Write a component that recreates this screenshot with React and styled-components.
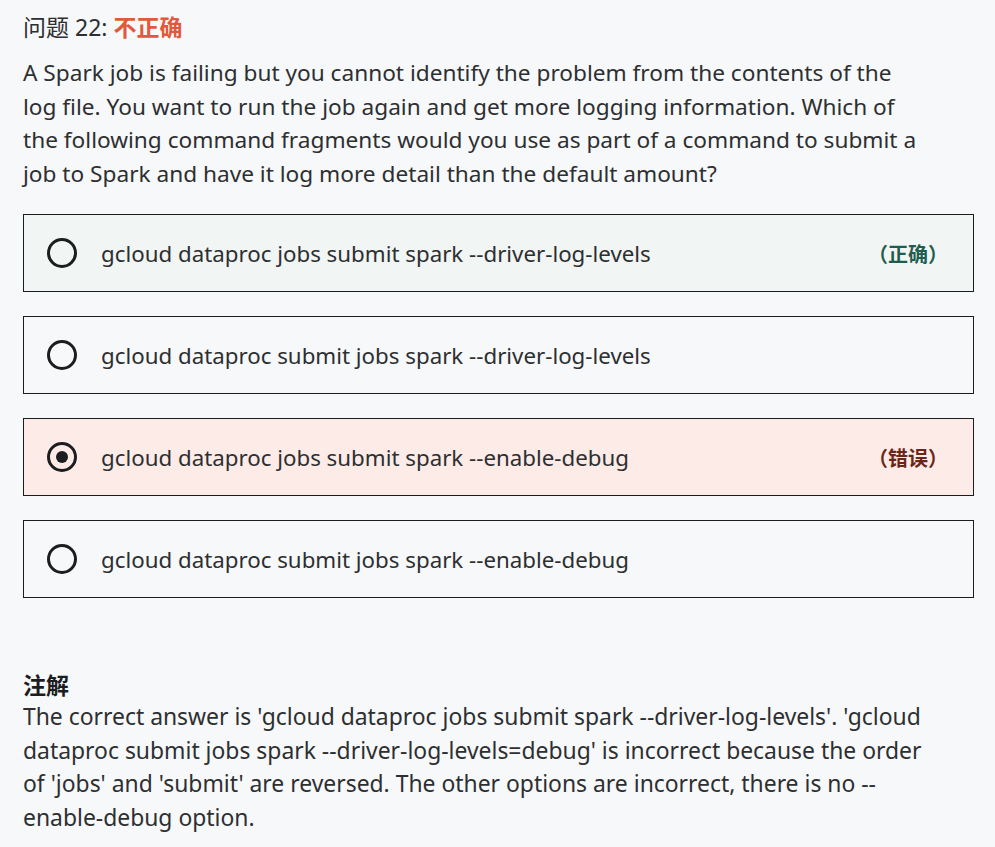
import React from "react";
import styled, { createGlobalStyle } from "styled-components";

const GlobalStyle = createGlobalStyle`
    html, body {
        margin: 0;
        padding: 0;
        background: #f7f8fa;
    }
    body {
        font-family: "Noto Sans", "Noto Sans CJK SC", sans-serif;
        color: #2d2f31;
    }
`;

const Page = styled.div`
    padding: 10px 22px 20px 23px;
    width: 951px;
`;

const Title = styled.div`
    font-size: 23px;
    line-height: 34px;
    color: #2d2f31;
`;

const Verdict = styled.span`
    font-weight: 700;
    color: #e0593a;
`;

const Question = styled.p`
    margin: 12px 0 24px;
    max-width: 905px;
    font-size: 22.65px;
    line-height: 33.5px;
`;

const Options = styled.div`
    display: flex;
    flex-direction: column;
    gap: 24px;
`;

const Option = styled.div`
    display: flex;
    align-items: center;
    height: 76px;
    padding: 0 25px 0 23px;
    border: 1px solid #1c1d1f;
    background: ${({ $state }) =>
        $state === "correct" ? "#f1f5f4" : $state === "wrong" ? "#fcebe7" : "#f7f8fa"};
`;

const Radio = styled.span`
    box-sizing: border-box;
    width: 30px;
    height: 30px;
    border-radius: 50%;
    border: 3px solid #1c1d1f;
    display: flex;
    align-items: center;
    justify-content: center;
    flex-shrink: 0;

    &::after {
        content: "";
        display: ${({ $checked }) => ($checked ? "block" : "none")};
        width: 12px;
        height: 12px;
        border-radius: 50%;
        background: #1c1d1f;
    }
`;

const OptionText = styled.span`
    flex: 1;
    margin-left: 24px;
    font-size: 22.3px;
`;

const Mark = styled.span`
    font-size: 20px;
    font-weight: 700;
    color: ${({ $state }) => ($state === "correct" ? "#1d5e4f" : "#6c2517")};
`;

const Notes = styled.div`
    margin-top: 72px;
    max-width: 905px;
`;

const NotesTitle = styled.div`
    font-size: 23px;
    font-weight: 700;
    line-height: 30px;
    color: #1c1d1f;
`;

const NotesText = styled.p`
    margin: 0;
    font-size: 22.9px;
    line-height: 33.5px;
`;

const options = [
    { text: "gcloud dataproc jobs submit spark --driver-log-levels", state: "correct", mark: "（正确）" },
    { text: "gcloud dataproc submit jobs spark --driver-log-levels" },
    { text: "gcloud dataproc jobs submit spark --enable-debug", state: "wrong", mark: "（错误）", checked: true },
    { text: "gcloud dataproc submit jobs spark --enable-debug" },
];

const App = () => {
    return (
        <>
            <GlobalStyle />
            <Page>
                <Title>
                    问题 22: <Verdict>不正确</Verdict>
                </Title>
                <Question>
                    A Spark job is failing but you cannot identify the problem from the contents of the log file.
                    You want to run the job again and get more logging information. Which of the following
                    command fragments would you use as part of a command to submit a job to Spark and have it
                    log more detail than the default amount?
                </Question>

                {/* Варианты ответа */}
                <Options>
                    {options.map((opt) => (
                        <Option key={opt.text} $state={opt.state}>
                            <Radio $checked={opt.checked} />
                            <OptionText>{opt.text}</OptionText>
                            {opt.mark && <Mark $state={opt.state}>{opt.mark}</Mark>}
                        </Option>
                    ))}
                </Options>

                <Notes>
                    <NotesTitle>注解</NotesTitle>
                    <NotesText>
                        The correct answer is 'gcloud dataproc jobs submit spark --driver-log-levels'. 'gcloud
                        dataproc submit jobs spark --driver-log-levels=debug' is incorrect because the order of
                        'jobs' and 'submit' are reversed. The other options are incorrect, there is no
                        --enable-debug option.
                    </NotesText>
                </Notes>
            </Page>
        </>
    );
};

export default App;
